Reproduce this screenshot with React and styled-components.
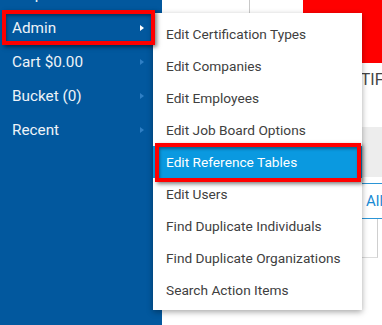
import React from "react";
import styled, { createGlobalStyle } from "styled-components";

const Global = createGlobalStyle`
  html, body { margin: 0; padding: 0; background: #fff; }
  body { font-family: Roboto, "Liberation Sans", Arial, sans-serif; }
`;

const Frame = styled.div`
  position: relative;
  width: 382px;
  height: 325px;
  overflow: hidden;
  display: flex;
  background: #fff;
`;

const Sidebar = styled.nav`
  width: 162px;
  flex: none;
  background: #02589e;
  display: flex;
  flex-direction: column;
`;

const NavList = styled.ul`
  list-style: none;
  margin: -23px 0 0;
  padding: 0;
`;

const NavItem = styled.li`
  height: 34px;
  display: flex;
  align-items: center;
  justify-content: space-between;
  padding: 0 18px 0 12px;
  font-size: 15.3px;
  color: #eef3f8;
`;

const Chevron = styled.span`
  width: 0;
  height: 0;
  border-top: 3.5px solid transparent;
  border-bottom: 3.5px solid transparent;
  border-left: 4px solid ${(p) => (p.$active ? "#ffffff" : "#2f7fc4")};
`;

const Main = styled.main`
  flex: 1;
  display: flex;
  flex-direction: column;
  min-width: 0;
`;

const TopRow = styled.div`
  display: flex;
  height: 63px;
`;

const Cell = styled.div`
  width: 87px;
  height: 13px;
  border-right: 1px solid #c8c8c8;
  overflow: hidden;
  font-size: 14px;
  color: #333;
`;

const CellText = styled.div`
  margin-top: -12px;
  line-height: 15px;
  padding-left: 36px;
`;

const Spacer = styled.div`
  flex: 1;
`;

const RedBlock = styled.div`
  width: 79px;
  background: #ff0000;
`;

const Title = styled.div`
  margin-top: 7px;
  height: 20px;
  line-height: 20px;
  font-size: 16px;
  color: #444;
  white-space: nowrap;
  padding-left: 170px;
`;

const GrayBand = styled.div`
  margin-top: 37px;
  height: 50px;
  background: #ededed;
`;

const Tabs = styled.div`
  margin-top: 6px;
  height: 34px;
  border-top: 1px solid #2b95d6;
  border-bottom: 1px solid #2b95d6;
  display: flex;
  align-items: center;
  padding-left: 204px;
  font-size: 15px;
  color: #1a8ad4;
  white-space: nowrap;
`;

const Box = styled.div`
  width: 215px;
  height: 38px;
  border-right: 1px solid #cfcfcf;
  border-bottom: 1px solid #dcdcdc;
`;

const Menu = styled.ul`
  position: absolute;
  left: 153px;
  top: 13px;
  width: 209px;
  margin: 0;
  padding: 5px 0 4px;
  list-style: none;
  background: #fff;
  box-shadow: 0 2px 6px rgba(0, 0, 0, 0.35);
`;

const MenuItem = styled.li`
  height: 32px;
  line-height: 32px;
  padding-left: 13px;
  font-size: 13.7px;
  white-space: nowrap;
  color: ${(p) => (p.$active ? "#ffffff" : "#404040")};
  background: ${(p) => (p.$active ? "#0a99e0" : "transparent")};
`;

const Annotation = styled.div`
  position: absolute;
  box-sizing: border-box;
  border: 4px solid #ff0000;
  box-shadow: 2px 2px 4px rgba(0, 0, 0, 0.5),
    inset 1px 2px 3px rgba(0, 0, 0, 0.35);
  pointer-events: none;
`;

const navItems = ["Help", "Admin", "Cart $0.00", "Bucket (0)", "Recent"];
const menuItems = [
  "Edit Certification Types",
  "Edit Companies",
  "Edit Employees",
  "Edit Job Board Options",
  "Edit Reference Tables",
  "Edit Users",
  "Find Duplicate Individuals",
  "Find Duplicate Organizations",
  "Search Action Items",
];

export default function App() {
  return (
    <>
      <Global />
      <Frame>
        <Sidebar>
          <NavList>
            {navItems.map((t) => (
              <NavItem key={t}>
                <span>{t}</span>
                {t !== "Help" && <Chevron $active={t === "Admin"} />}
              </NavItem>
            ))}
          </NavList>
        </Sidebar>
        <Main>
          <TopRow>
            <Cell>
              <CellText>00000</CellText>
            </Cell>
            <Spacer />
            <RedBlock />
          </TopRow>
          <Title>CERTIFICATIONS</Title>
          <GrayBand />
          <Tabs>All</Tabs>
          <Box />
        </Main>
        <Menu>
          {menuItems.map((t) => (
            <MenuItem key={t} $active={t === "Edit Reference Tables"}>
              {t}
            </MenuItem>
          ))}
        </Menu>
        <Annotation style={{ left: 2, top: 10, width: 153, height: 35 }} />
        <Annotation style={{ left: 155, top: 143, width: 206, height: 39 }} />
      </Frame>
    </>
  );
}
